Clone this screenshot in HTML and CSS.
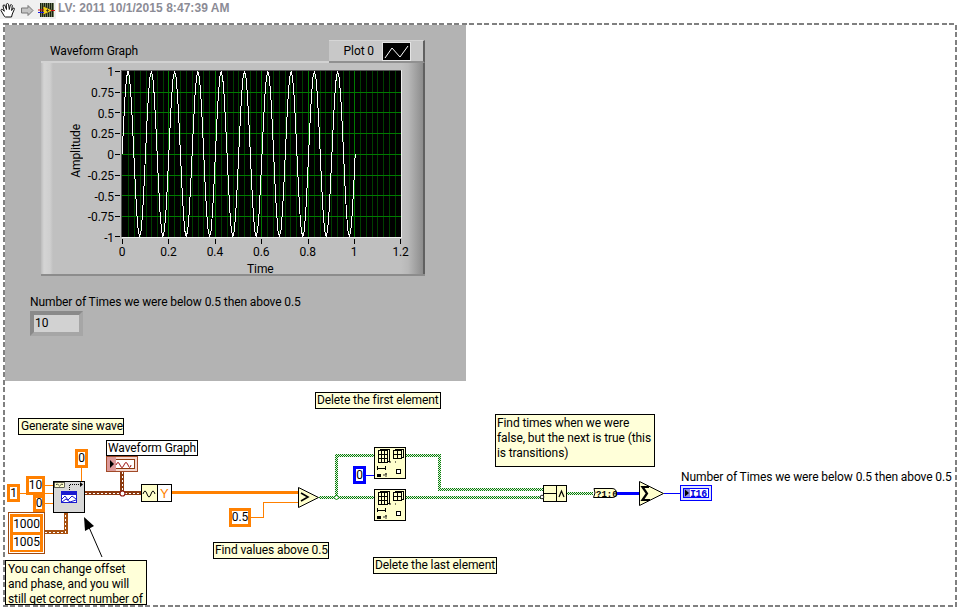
FILE: index.html
```html
<!DOCTYPE html>
<html lang="en">
<head>
<meta charset="utf-8">
<title>LV: 2011 10/1/2015 8:47:39 AM</title>
<link rel="stylesheet" href="styles.css">
</head>
<body>
<div class="stage">
  <header class="titlebar">
    <div class="tools">
      <svg class="tool-icons" width="56" height="20" viewBox="0 0 56 20">
        <path d="M4.5 16.5 L1 10.5 Q1 8.5 2.8 9.7 L4.3 11.3 L3 6 Q3.2 4.3 4.8 5.2 L6.5 9.5 L6.3 4.2 Q7.5 2.8 8.5 4.2 L9.3 9.5 L10.3 5 Q11.6 4 12.3 5.5 L11.6 10.5 L13.2 8 Q14.8 7.8 14.3 9.4 L12.3 14 L11.5 17 L5.5 17 Z" fill="#fff" stroke="#111" stroke-width="1"/>
        <path d="M21.5 8 H28 V5.5 L33 10.5 L28 15.5 V13 H21.5 Z" fill="#c4c4c4" stroke="#777" stroke-width="1"/>
        <rect x="40" y="3" width="14" height="14" fill="#1c2414"/>
        <path d="M41.5 3v14M43.5 3v14M45.5 3v14M47.5 3v14M49.5 3v14M51.5 3v14M53.5 3v14" stroke="#9aa880" stroke-width=".7"/>
        <path d="M43 6 L53 10.5 L43 15 Z" fill="#f2d21c" stroke="#222" stroke-width=".6"/>
        <path d="M46 10.5H49M47.5 9V12" stroke="#222" stroke-width=".7"/>
        <path d="M38 10 H44" stroke="#d01010" stroke-width="1"/>
        <path d="M38 12.5 H44" stroke="#1818e0" stroke-width="1"/>
        <path d="M51 10.5 H55" stroke="#d01010" stroke-width="1"/>
      </svg>
    </div>
    <span class="title">LV: 2011 10/1/2015 8:47:39 AM</span>
  </header>

  <section class="panel"></section>

  <div class="graph">
    <div class="graph-edge-left"></div>
    <div class="graph-edge-right"></div>
  </div>
  <div class="legend">
    <span class="legend-name">Plot 0</span>
    <svg class="legend-swatch" width="27" height="17" viewBox="0 0 27 17">
      <path d="M2 15 L9 5 L17 14 L25 3" fill="none" stroke="#fff" stroke-width="1"/>
    </svg>
  </div>
  <span class="graph-title">Waveform Graph</span>

  <svg class="plot" width="960" height="290" viewBox="0 0 960 290">
    <defs>
      <clipPath id="plot-clip"><rect x="122" y="71" width="279" height="166"/></clipPath>
      <polyline id="cycle" fill="none" stroke="#fff" stroke-width="1" shape-rendering="crispEdges" points="0,0 1.46,-31.8 2.91,-58.7 4.37,-76.7 5.83,-82.5 7.28,-76.7 8.74,-58.7 10.19,-31.8 11.65,0 13.1,31.8 14.56,58.7 16.02,76.7 17.48,82.5 18.93,76.7 20.39,58.7 21.84,31.8 23.3,0"/>
    </defs>
    <rect x="121" y="70" width="280" height="167" fill="#000"/>
    <path d="M121 70.5 H401 M121.5 70 V237" stroke="#555" fill="none"/>
    <path d="M122 237.5 H402 M401.5 70 V238" stroke="#eee" fill="none"/>
    <g clip-path="url(#plot-clip)" shape-rendering="crispEdges">
      <path stroke="#003f00" stroke-width="1" d="M128.5 71V237M134.5 71V237M140.5 71V237M146.5 71V237M151.5 71V237M157.5 71V237M163.5 71V237M174.5 71V237M180.5 71V237M186.5 71V237M192.5 71V237M198.5 71V237M203.5 71V237M209.5 71V237M221.5 71V237M227.5 71V237M233.5 71V237M238.5 71V237M244.5 71V237M250.5 71V237M256.5 71V237M267.5 71V237M273.5 71V237M279.5 71V237M285.5 71V237M290.5 71V237M296.5 71V237M302.5 71V237M314.5 71V237M320.5 71V237M325.5 71V237M331.5 71V237M337.5 71V237M343.5 71V237M349.5 71V237M360.5 71V237M366.5 71V237M372.5 71V237M377.5 71V237M383.5 71V237M389.5 71V237M395.5 71V237"/>
      <path stroke="#007a00" stroke-width="1" d="M168.5 71V237M215.5 71V237M261.5 71V237M308.5 71V237M354.5 71V237M121 92.5H401M121 112.5H401M121 133.5H401M121 154.5H401M121 175.5H401M121 195.5H401M121 216.5H401"/>
    </g>
    <g clip-path="url(#plot-clip)">
      <g transform="translate(122.2 154)">
        <use href="#cycle"/><use href="#cycle" x="23.3"/><use href="#cycle" x="46.6"/><use href="#cycle" x="69.9"/><use href="#cycle" x="93.2"/><use href="#cycle" x="116.5"/><use href="#cycle" x="139.8"/><use href="#cycle" x="163.1"/><use href="#cycle" x="186.4"/><use href="#cycle" x="209.7"/>
      </g>
    </g>
    <path stroke="#000" stroke-width="1" shape-rendering="crispEdges" d="M115 71.5H120M115 92.5H120M115 112.5H120M115 133.5H120M115 154.5H120M115 175.5H120M115 195.5H120M115 216.5H120M115 236.5H120M122.5 239V244M168.5 239V244M215.5 239V244M261.5 239V244M308.5 239V244M354.5 239V244M400.5 239V244"/>
  </svg>

  <div class="y-ticks">
    <span>1</span><span>0.75</span><span>0.5</span><span>0.25</span><span>0</span><span>-0.25</span><span>-0.5</span><span>-0.75</span><span>-1</span>
  </div>
  <div class="x-ticks">
    <span>0</span><span>0.2</span><span>0.4</span><span>0.6</span><span>0.8</span><span>1</span><span>1.2</span>
  </div>
  <span class="axis-y">Amplitude</span>
  <span class="axis-x">Time</span>

  <span class="count-label">Number of Times we were below 0.5 then above 0.5</span>
  <div class="count-box"><span class="count-value">10</span></div>

  <svg class="diagram" width="960" height="610" viewBox="0 0 960 610">
    <defs>
      <pattern id="bool-wire" width="2" height="2" patternUnits="userSpaceOnUse">
        <rect width="2" height="2" fill="#e2f2e2"/>
        <rect width="1" height="1" fill="#0a7d0a"/>
        <rect x="1" y="1" width="1" height="1" fill="#0a7d0a"/>
      </pattern>
    </defs>
    <rect x="4" y="24" width="952" height="582" fill="none" stroke="#808080" stroke-width="2" stroke-dasharray="5 2.5" shape-rendering="crispEdges"/>

    <g fill="none" shape-rendering="crispEdges">
      <!-- numeric wires -->
      <path stroke="#ff8000" stroke-width="1" d="M20 493.5H53M45 485.5H53M45 503.5H53M81.5 468V481"/>
      <path stroke="#ff8000" stroke-width="1" d="M251 517.5H263.5V502.5H298"/>
      <path stroke="#ff8000" stroke-width="3" d="M172 492H298"/>
      <!-- dynamic data wires -->
      <path stroke="#8c3a10" stroke-width="4" d="M85 493H141M122 472V493"/>
      <path stroke="#fff" stroke-width="1" stroke-dasharray="2 2" d="M85 493.5H141M122.5 472V493"/>
      <path stroke="#a8500f" stroke-width="4" d="M45 532H65.5V513"/>
      <path stroke="#fff" stroke-width="1" stroke-dasharray="2 2" d="M45 532.5H65.5V513"/>
      <!-- boolean wires -->
      <path stroke="url(#bool-wire)" stroke-width="3" d="M319 497.5H374M336.5 497V455.5H374M406 455.5H439.5V489.5H543M406 497.5H543M567 493.5H593"/>
      <!-- integer wires -->
      <path stroke="#0000ff" stroke-width="1" d="M366 475.5H374M664 493.5H680"/>
      <path stroke="#0000ff" stroke-width="3" d="M617 493H639"/>
    </g>
    <circle cx="122.5" cy="493.5" r="2.5" fill="#fff" stroke="#8c1a10" stroke-width="1.2"/>
    <path d="M336.5 495 L339 497.5 L336.5 500 L334 497.5 Z" fill="#fff" stroke="#0a8a0a"/>

    <!-- Sine wave subVI -->
    <rect x="53.5" y="481.5" width="31" height="31" fill="#d8d8d8" stroke="#000"/>
    <rect x="54.5" y="482.5" width="10" height="5" fill="#ffffcc" stroke="#000" stroke-width=".6"/>
    <path d="M56 485 q1.2 -2.4 2.4 0 t2.4 0 t2 0" fill="none" stroke="#000" stroke-width=".7"/>
    <path d="M69.5 490V484.5H80" fill="none" stroke="#000" stroke-dasharray="1 1" shape-rendering="crispEdges"/>
    <path d="M80 482 L83 484.5 L80 487 Z" fill="#000"/>
    <rect x="61.5" y="491.5" width="15" height="11" fill="#fff" stroke="#1a1ad0"/>
    <rect x="62" y="492" width="14" height="3" fill="#1a1ad0"/>
    <path d="M62 499 L65 496 L68 500 L72 496 L76 499 M62 502 L66 499 L70 502 L76 500" fill="none" stroke="#1a1ad0" stroke-width="1"/>

    <!-- graph terminal -->
    <rect x="106.5" y="456.5" width="31" height="15" fill="#f4d8d0" stroke="#a14a28"/>
    <rect x="109.5" y="459.5" width="25" height="9" fill="#fff" stroke="#8c3a10"/>
    <rect x="107" y="457" width="9" height="14" fill="#dc9a9a"/>
    <path d="M110 460 L114 464 L110 468 Z" fill="#000"/>
    <path d="M116 465 q2 -5 4 0 t4 0 t4 0 t3 0" fill="none" stroke="#a01818" stroke-width="1"/>

    <!-- Dynamic to array -->
    <rect x="141.5" y="484.5" width="30" height="17" fill="#fff" stroke="#000"/>
    <rect x="142" y="485" width="15" height="16" fill="#ffffcc"/>
    <path d="M157.5 484V502" stroke="#000"/>
    <path d="M143 494 q2 -6 4 0 t4 0 t4 0" fill="none" stroke="#000"/>
    <text class="y-letter" x="160" y="498">Y</text>

    <!-- Compare greater -->
    <path d="M298.5 487.5 L318.5 497.5 L298.5 507.5 Z" fill="#ffffcc" stroke="#000"/>
    <path d="M301 493 L308 497 L301 501" fill="none" stroke="#000" stroke-width="1.6"/>

    <!-- Delete from array nodes -->
    <symbol id="del" width="32" height="32" viewBox="0 0 32 32">
      <rect x=".5" y=".5" width="31" height="31" fill="#ffffcc" stroke="#000"/>
      <path d="M4.5 3.5h9v12h-9zM4.5 7.5h9M4.5 11.5h9M7.5 3.5v12M10.5 3.5v12M6 3V2h9v12h-1" fill="none" stroke="#000" shape-rendering="crispEdges"/>
      <path d="M19.5 3.5h8v8h-8zM19.5 7.5h8M23.5 3.5v8M21 3V2h8v8h-1" fill="none" stroke="#000" shape-rendering="crispEdges"/>
      <path d="M15 15h2M21 15h1" stroke="#000"/>
      <path d="M3.5 19v4M11.5 19v4M4 21h7" stroke="#000" fill="none" shape-rendering="crispEdges"/>
      <rect x="3" y="27" width="4" height="3" fill="#000"/>
      <path d="M9 28h2M12 26v4M11 27h2" stroke="#000" stroke-width=".8"/>
      <rect x="22.5" y="22.5" width="4" height="4" fill="#fff" stroke="#000" shape-rendering="crispEdges"/>
    </symbol>
    <use href="#del" x="374" y="447"/>
    <use href="#del" x="374" y="489"/>

    <!-- And -->
    <rect x="543.5" y="485.5" width="23" height="16" fill="#ffffcc" stroke="#000"/>
    <path d="M556.5 485V502M544 493.5H556" stroke="#000" shape-rendering="crispEdges"/>
    <circle cx="542" cy="497" r="1.8" fill="#fff" stroke="#000" stroke-width=".8"/>
    <path d="M559 497 L561.5 491 L564 497" fill="none" stroke="#000" stroke-width="1.2"/>

    <!-- Bool to 0/1 -->
    <path d="M594 488.5 H612 Q616.5 488.5 616.5 493.5 Q616.5 497.5 612 497.5 H593.5 L595 493 Z" fill="#ffffcc" stroke="#000"/>
    <text class="bool-text" x="596" y="496.5">?1:0</text>

    <!-- Sum -->
    <path d="M639.5 481.5 L663.5 493.5 L639.5 505.5 Z" fill="#ffffcc" stroke="#000"/>
    <path d="M649 487 H642.5 L647 493.5 L642.5 500 H650" fill="none" stroke="#000" stroke-width="2.2"/>

    <!-- I16 terminal -->
    <rect x="680.5" y="485.5" width="31" height="15" fill="#dfe4ff" stroke="#0000ff"/>
    <rect x="683.5" y="488.5" width="25" height="9" fill="#fff" stroke="#0000ff"/>
    <rect x="684" y="489" width="6" height="8" fill="#8c8ce8"/>
    <path d="M685 489.5 L689 493 L685 496.5 Z" fill="#000"/>
    <text class="i16-text" x="690" y="496.5">I16</text>

    <!-- Arrow -->
    <path d="M102 557 L88 525" stroke="#000" fill="none"/>
    <path d="M84 517 L85 531 L94 526 Z" fill="#000"/>
  </svg>

  <div class="comment c-sine">Generate sine wave</div>
  <div class="comment c-first">Delete the first element</div>
  <div class="comment c-last">Delete the last element</div>
  <div class="comment c-above">Find values above 0.5</div>
  <div class="comment c-trans">Find times when we were<br>false, but the next is true (this<br>is transitions)</div>
  <div class="comment c-offset">You can change offset<br>and phase, and you will<br>still get correct number of</div>
  <div class="wire-label">Waveform Graph</div>
  <span class="out-label">Number of Times we were below 0.5 then above 0.5</span>

  <div class="const k-top">0</div>
  <div class="const k-ten">10</div>
  <div class="const k-one">1</div>
  <div class="const k-zero">0</div>
  <div class="const k-half">0.5</div>
  <div class="const blue k-index">0</div>
  <div class="array">
    <div class="array-inner">
      <span class="cell">1000</span>
      <span class="cell">1005</span>
    </div>
  </div>
</div>
</body>
</html>
```
FILE: styles.css
```css
* { box-sizing: border-box; }
html, body { margin: 0; padding: 0; background: #fff; }
body { overflow: hidden; }

.stage {
  position: relative;
  width: 960px;
  height: 610px;
  overflow: hidden;
  font-family: Roboto, "Liberation Sans", Arial, sans-serif;
  font-size: 12px;
  line-height: 15px;
  letter-spacing: -.1px;
  color: #000;
}

.titlebar { display: flex; align-items: flex-start; height: 23px; }
.tools { width: 56px; height: 19px; background: #f0f0f0; }
.tool-icons { display: block; }
.title { margin: 1px 0 0 2px; font-family: "Liberation Sans", Arial, sans-serif; font-size: 12px; font-weight: bold; color: #8c8c96; letter-spacing: .05px; }

.panel { position: absolute; left: 5px; top: 25px; width: 461px; height: 356px; background: #b3b3b3; }

.graph {
  position: absolute; left: 41px; top: 61px; width: 384px; height: 215px;
  background: #c0c0c0;
  border-top: 2px solid #d2d2d2;
  border-bottom: 2px solid #8c8c8c;
}
.graph-edge-left {
  position: absolute; left: 0; top: 0; bottom: 0; width: 12px;
  background: linear-gradient(90deg, #bcbcbc 0, #d4d4d4 25%, #cfcfcf 75%, #c0c0c0 100%);
}
.graph-edge-right {
  position: absolute; right: 0; top: 0; bottom: 0; width: 24px;
  background: linear-gradient(90deg, #c0c0c0 0, #b8b8b8 30%, #8c8c8c 92%, #606060 92%, #606060 100%);
}
.legend {
  position: absolute; left: 329px; top: 40px; width: 96px; height: 23px;
  display: flex; align-items: center; justify-content: flex-end; gap: 8px; padding-right: 12px;
  background: #c8c8c8;
  border-top: 1px solid #d6d6d6;
  border-bottom: 2px solid #909090;
  border-right: 2px solid #606060;
}
.legend-name { font-size: 12px; }
.legend-swatch { display: block; background: #000; border: 1px solid #e4e4e4; box-sizing: content-box; }
.graph-title { position: absolute; left: 50px; top: 44px; }

.plot { position: absolute; left: 0; top: 0; }

.y-ticks {
  position: absolute; left: 70px; top: 64px; width: 44px; height: 182px;
  display: flex; flex-direction: column; justify-content: space-between; align-items: flex-end;
  line-height: 16px;
}
.x-ticks {
  position: absolute; left: 98.8px; top: 245px; width: 325px;
  display: grid; grid-template-columns: repeat(7, 1fr); justify-items: center;
}
.axis-y {
  position: absolute; left: 69px; top: 124px; writing-mode: vertical-rl; transform: rotate(180deg);
}
.axis-x { position: absolute; left: 247px; top: 262px; }

.count-label { position: absolute; left: 30px; top: 295px; }
.count-box {
  position: absolute; left: 30px; top: 311px; width: 53px; height: 25px;
  background: #d2d2d2;
  border-style: solid; border-width: 4px 4px 4px 4px;
  border-color: #8a8a8a #a6a6a6 #a6a6a6 #8a8a8a;
  padding-left: 1px; line-height: 16px;
}

.diagram { position: absolute; left: 0; top: 0; pointer-events: none; }
.y-letter { font-family: "Liberation Sans", Arial, sans-serif; font-size: 13px; fill: #ff8000; }
.bool-text { font-family: "Liberation Mono", monospace; font-size: 9px; font-weight: bold; letter-spacing: 0; }
.i16-text { font-family: "Liberation Mono", monospace; font-size: 10px; font-weight: bold; fill: #0000e0; letter-spacing: -.4px; }

.comment {
  position: absolute; background: #ffffd9; border: 1px solid #000; padding: 0 1px;
  white-space: nowrap; overflow: hidden;
}
.c-sine { left: 18px; top: 418px; width: 106px; height: 17px; padding-left: 2px; }
.c-first { left: 315px; top: 392px; width: 126px; height: 17px; }
.c-last { left: 373px; top: 557px; width: 124px; height: 17px; }
.c-above { left: 213px; top: 542px; width: 116px; height: 17px; }
.c-trans { left: 495px; top: 414px; width: 160px; height: 53px; padding-top: 1px; }
.c-offset { left: 5px; top: 560px; width: 142px; height: 45px; padding: 1px 0 0 2px; }
.wire-label {
  position: absolute; left: 106px; top: 440px; width: 92px; height: 16px;
  background: #fff; border: 1px solid #000; padding: 0 1px; white-space: nowrap; overflow: hidden;
}
.out-label { position: absolute; left: 681px; top: 470px; white-space: nowrap; }

.const {
  position: absolute; display: flex; align-items: center; justify-content: center;
  background: #fff; border: 3px solid #ff8000;
}
.const.blue { border-color: #0000ff; }
.k-top { left: 75px; top: 449px; width: 13px; height: 19px; }
.k-ten { left: 26px; top: 476px; width: 19px; height: 19px; }
.k-one { left: 7px; top: 484px; width: 13px; height: 18px; }
.k-zero { left: 33px; top: 495px; width: 12px; height: 17px; }
.k-half { left: 229px; top: 508px; width: 22px; height: 19px; }
.k-index { left: 353px; top: 466px; width: 13px; height: 18px; }

.array {
  position: absolute; left: 8px; top: 512px; width: 37px; height: 42px;
  background: #fff; border: 1px solid #a14a10; padding: 1px;
}
.array-inner {
  display: flex; flex-direction: column; height: 100%; background: #fff;
  border: 3px solid #ff8000;
}
.cell {
  flex: 1; display: flex; align-items: center; justify-content: center; background: #fff;
}
.cell + .cell { border-top: 3px solid #ff8000; }
```
